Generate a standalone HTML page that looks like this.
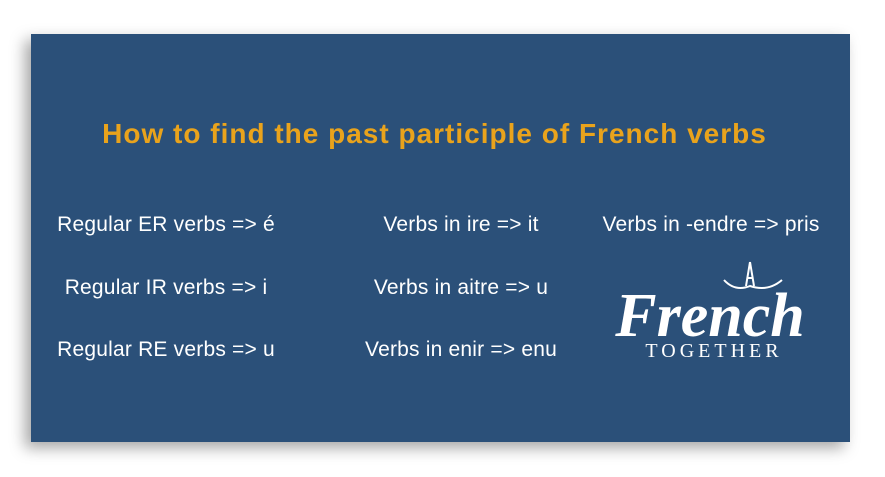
<!DOCTYPE html>
<html><head><style>
body{margin:0;width:885px;height:477px;background:#fff;position:relative;overflow:hidden;font-family:"Liberation Sans",sans-serif}
.p{position:absolute;left:31px;top:34px;width:819px;height:408px;background:#2b5079;box-shadow:-6px 6px 14px rgba(0,0,0,.35)}
.t{position:absolute;left:0;width:885px;top:118px;text-align:center;color:#e9a31c;font-weight:bold;font-size:28px;letter-spacing:1px;transform:translateX(-8px)}
.c{position:absolute;color:#fff;font-size:21px;white-space:nowrap;transform:translateX(-50%);letter-spacing:0.2px}
</style></head><body>
<div class="p"></div>
<div class="t">How to find the past participle of French verbs</div>
<div class="c" style="left:166px;top:213px">Regular ER verbs =&gt; é</div>
<div class="c" style="left:461px;top:213px">Verbs in ire =&gt; it</div>
<div class="c" style="left:711px;top:213px">Verbs in -endre =&gt; pris</div>
<div class="c" style="left:166px;top:276px">Regular IR verbs =&gt; i</div>
<div class="c" style="left:461px;top:276px">Verbs in aitre =&gt; u</div>
<div class="c" style="left:166px;top:338px">Regular RE verbs =&gt; u</div>
<div class="c" style="left:461px;top:338px">Verbs in enir =&gt; enu</div>
<svg style="position:absolute;left:600px;top:250px" width="220" height="120">
<path d="M150 12 L146 36 M150 12 L154 36 M147 28 H153" stroke="#fff" stroke-width="2" fill="none"/>
<path d="M124 30 Q135 42 150 36 Q168 42 182 30" stroke="#fff" stroke-width="2" fill="none"/>
<text x="110" y="86" text-anchor="middle" fill="#fff" font-family="Liberation Serif,serif" font-style="italic" font-weight="bold" font-size="62">French</text>
<text x="114" y="107" text-anchor="middle" fill="#fff" font-family="Liberation Serif,serif" font-size="20" letter-spacing="4">TOGETHER</text>
</svg>
</body></html>
